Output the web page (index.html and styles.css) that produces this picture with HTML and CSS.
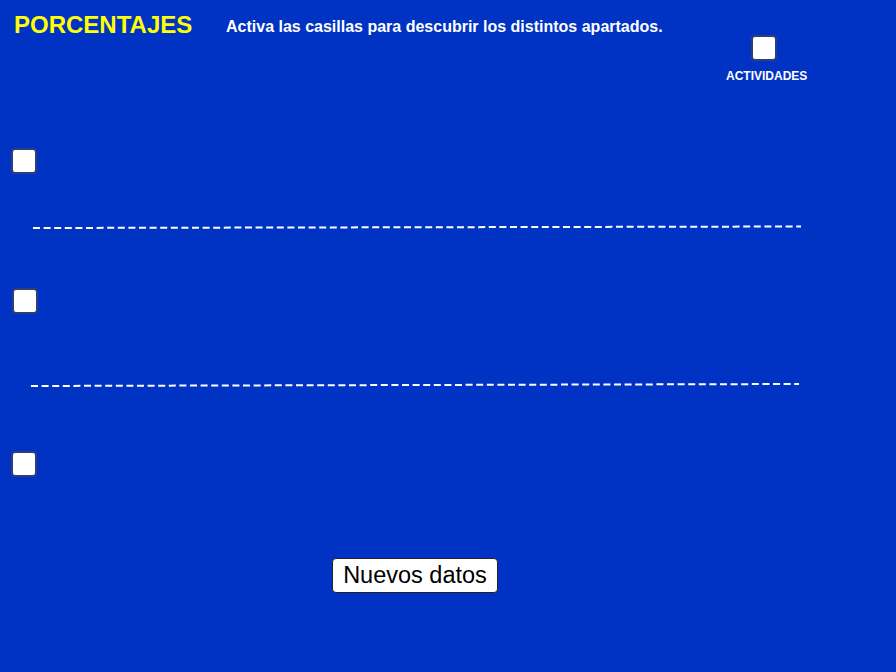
FILE: index.html
```html
<!DOCTYPE html>
<html lang="es">
<head>
<meta charset="utf-8">
<title>Porcentajes</title>
<link rel="stylesheet" href="styles.css">
</head>
<body>
<div class="applet">
  <h1 class="title">PORCENTAJES</h1>
  <p class="subtitle">Activa las casillas para descubrir los distintos apartados.</p>

  <label class="act">
    <span class="box"></span>
    <span class="act-label">ACTIVIDADES</span>
  </label>

  <span class="box b1"></span>
  <span class="box b2"></span>
  <span class="box b3"></span>

  <svg class="lines" width="896" height="672" viewBox="0 0 896 672">
    <line x1="33" y1="228" x2="801" y2="226.5" />
    <line x1="31" y1="386" x2="799" y2="384" />
  </svg>

  <button class="btn">Nuevos datos</button>
</div>
</body>
</html>
```

FILE: styles.css
```css
html, body {
  margin: 0;
  padding: 0;
}
body {
  background: #0033c4;
  font-family: "Liberation Sans", Arial, sans-serif;
}
.applet {
  position: relative;
  width: 896px;
  height: 672px;
  background: #0033c4;
  overflow: hidden;
}
.title {
  position: absolute;
  left: 14px;
  top: 11px;
  margin: 0;
  font-size: 24px;
  line-height: 28px;
  font-weight: bold;
  color: #ffff00;
}
.subtitle {
  position: absolute;
  left: 226px;
  top: 17px;
  margin: 0;
  font-size: 16px;
  line-height: 19px;
  font-weight: bold;
  color: #ffffff;
}
.act {
  position: absolute;
  left: 726px;
  top: 35px;
  display: flex;
  flex-direction: column;
  align-items: flex-start;
  gap: 8px;
}
.act .box {
  position: static;
  margin-left: 25px;
}
.act-label {
  font-size: 12px;
  line-height: 14px;
  font-weight: bold;
  color: #ffffff;
}
.box {
  position: absolute;
  width: 22px;
  height: 22px;
  background: #ffffff;
  border: 2px solid #2c3f78;
  border-radius: 4px;
  display: block;
}
.b1 { left: 11px; top: 148px; }
.b2 { left: 12px; top: 288px; }
.b3 { left: 11px; top: 451px; }
.lines {
  position: absolute;
  left: 0;
  top: 0;
  pointer-events: none;
}
.lines line {
  stroke: #ffffff;
  stroke-width: 2;
  stroke-dasharray: 7 3.6;
}
.btn {
  position: absolute;
  left: 332px;
  top: 558px;
  width: 166px;
  height: 35px;
  padding: 0;
  margin: 0;
  background: #ffffff;
  border: 1px solid #222222;
  border-radius: 4px;
  font-family: "Liberation Sans", Arial, sans-serif;
  font-size: 23.5px;
  color: #000000;
  line-height: 33px;
}
```
